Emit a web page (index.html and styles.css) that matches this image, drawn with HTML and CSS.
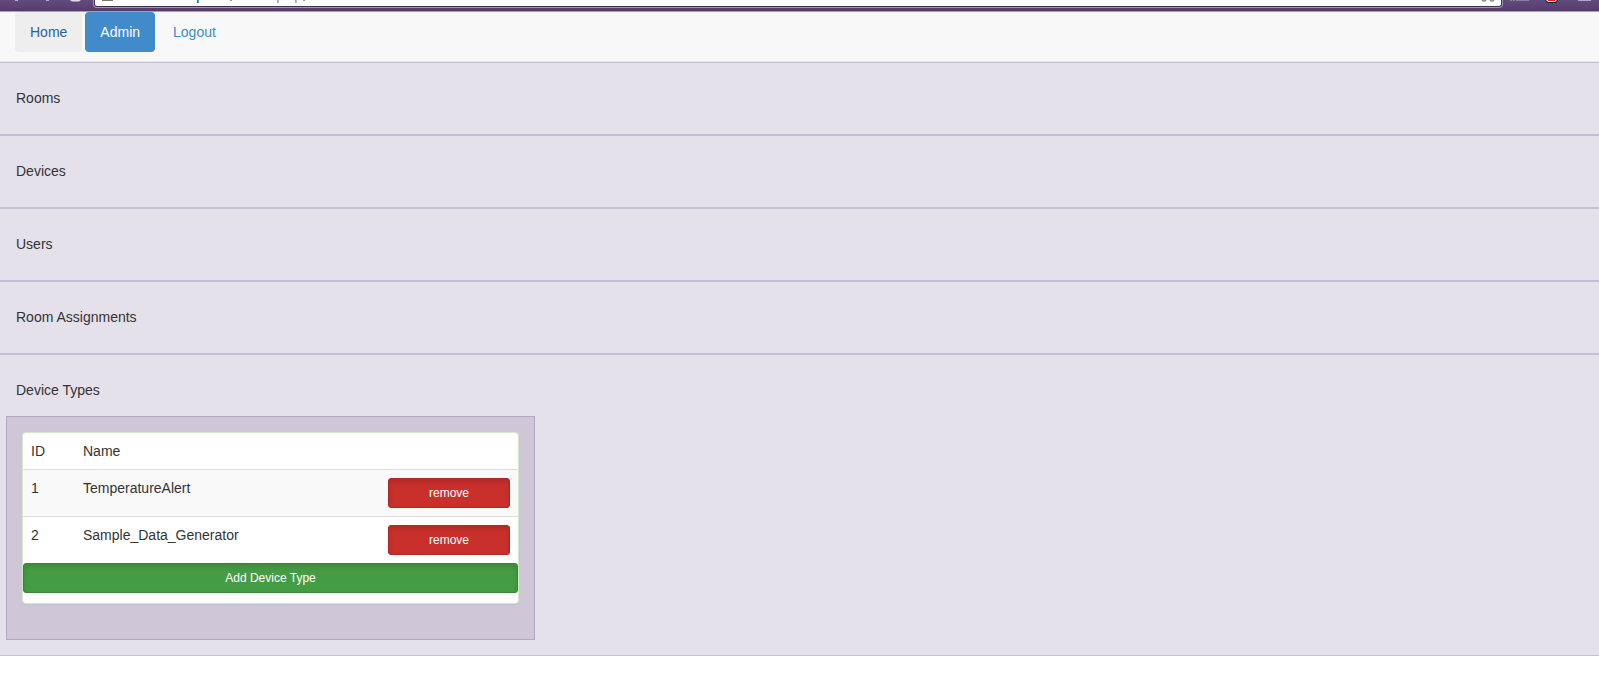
FILE: index.html
```html
<!DOCTYPE html>
<html lang="en">
<head>
<meta charset="utf-8">
<title>Admin</title>
<link rel="stylesheet" href="styles.css">
</head>
<body>
<div class="toolbar" aria-hidden="true">
  <svg class="toolbar-left" width="94" height="12" viewBox="0 0 94 12">
    <path d="M15 0h3v1h-3zM46 0h3v1h-3z" fill="#b9adc6"/>
    <path d="M70 0h11l-2 1.5h-7z" fill="#e0dde4"/>
  </svg>
  <div class="address">
    <svg width="220" height="6" viewBox="0 0 220 6">
      <path d="M7 0h11v1H7z" fill="#777"/>
      <path d="M102 0h1v3h-1z" fill="#7a5a1e"/>
      <path d="M103 0h1v3h-1z" fill="#4aa3dc"/>
      <path d="M135 0h2v1h-2zM208 0h2v1h-2z" fill="#9a9a9a"/>
      <path d="M182 0h1v3h-1zM200 0h1v3h-1z" fill="#c9a48c"/>
      <path d="M183 0h1v3h-1zM201 0h1v3h-1z" fill="#9cc4e4"/>
    </svg>
    <svg width="20" height="6" viewBox="0 0 20 6">
      <path d="M1 0q2 2 4 0M9 0q2 2 4 0" fill="none" stroke="#888" stroke-width="1.5"/>
    </svg>
  </div>
  <svg class="toolbar-right" width="97" height="12" viewBox="0 0 97 12">
    <path d="M8 0h2v1H8zM11 0h2v1h-2zM14 0h2v1h-2z" fill="#8b8691"/>
    <path d="M16 0h11v1H16z" fill="#8d7ba3"/>
    <path d="M43 0h13l-2 3h-9z" fill="#222"/>
    <path d="M44 0h11l-2 2h-7z" fill="#fff"/>
    <path d="M46 0h7v1h-7z" fill="#f01818"/>
    <path d="M76 0h13v1H76z" fill="#b3a6c2"/>
  </svg>
</div>
<nav class="navbar">
  <a class="pill pill-hover" href="#">Home</a>
  <a class="pill pill-active" href="#">Admin</a>
  <a class="pill" href="#">Logout</a>
</nav>
<main>
  <section class="section"><p class="title">Rooms</p></section>
  <section class="section"><p class="title">Devices</p></section>
  <section class="section"><p class="title">Users</p></section>
  <section class="section"><p class="title">Room Assignments</p></section>
  <section class="section section-open">
    <p class="title">Device Types</p>
    <div class="columns">
      <div class="well">
        <div class="panel">
          <table class="table">
            <thead>
              <tr><th class="col-id">ID</th><th>Name</th><th class="col-action"></th></tr>
            </thead>
            <tbody>
              <tr class="striped"><td>1</td><td>TemperatureAlert</td><td><button class="btn btn-danger" type="button">remove</button></td></tr>
              <tr><td>2</td><td>Sample_Data_Generator</td><td><button class="btn btn-danger" type="button">remove</button></td></tr>
            </tbody>
          </table>
          <button class="btn btn-success" type="button">Add Device Type</button>
        </div>
      </div>
    </div>
  </section>
</main>
</body>
</html>
```
FILE: styles.css
```css
* {
  box-sizing: border-box;
}

body {
  margin: 0;
  background: #fff;
  color: #333;
  font: 14px/20px "Liberation Sans", Arial, sans-serif;
}

.toolbar {
  display: flex;
  align-items: flex-start;
  height: 12px;
  border-bottom: 1px solid #a99db6;
  background: linear-gradient(#644b7d, #553c6c);
}

.toolbar-left,
.toolbar-right {
  flex: none;
}

.address {
  display: flex;
  flex: 1;
  justify-content: space-between;
  height: 7px;
  border: 1px solid #3f2c52;
  border-top: 0;
  border-radius: 0 0 3px 3px;
  background: #fff;
  box-shadow: 0 0 0 1px #a396b3;
}

.navbar {
  display: flex;
  gap: 3px;
  padding: 0 15px 9px;
  border-bottom: 1px solid #e7e7e7;
  background: #f8f8f8;
}

.pill {
  padding: 10px 15px;
  border-radius: 4px;
  color: #428bca;
  text-decoration: none;
}

.pill-hover {
  background: #eee;
  color: #2a6496;
}

.pill-active {
  background: #428bca;
  color: #fff;
}

.section {
  padding: 25px 6px 26px;
  border: solid #c5bfd6;
  border-width: 1px 0;
  background: #e4e1eb;
}

.section-open {
  padding-bottom: 15px;
}

.title {
  margin: 0;
  padding: 0 10px;
}

.columns {
  display: grid;
  grid-template-columns: repeat(3, 1fr);
  margin-top: 16px;
}

.well {
  padding: 15px 15px 35px;
  border: 1px solid #b3a9c6;
  background: #cfc6d7;
}

.panel {
  padding-bottom: 10px;
  border: 1px solid #d6e9c6;
  border-radius: 4px;
  background: #fff;
  box-shadow: 0 1px 1px rgba(0, 0, 0, 0.05);
}

.table {
  width: 100%;
  border-spacing: 0;
  table-layout: fixed;
}

.table th,
.table td {
  padding: 8px;
  font-weight: 400;
  text-align: left;
  vertical-align: top;
}

.table td {
  border-top: 1px solid #ddd;
}

.table .col-id {
  width: 52px;
}

.table .col-action {
  width: 138px;
}

.striped {
  background: #f9f9f9;
}

.btn {
  display: block;
  width: 100%;
  padding: 5px 10px;
  border: 1px solid;
  border-radius: 3px;
  box-shadow: inset 0 3px 5px rgba(0, 0, 0, 0.125);
  color: #fff;
  font: 12px/18px "Liberation Sans", Arial, sans-serif;
}

.btn-danger {
  border-color: #ac2925;
  background: #c9302c;
}

.btn-success {
  border-color: #398439;
  background: #449d44;
}
```
